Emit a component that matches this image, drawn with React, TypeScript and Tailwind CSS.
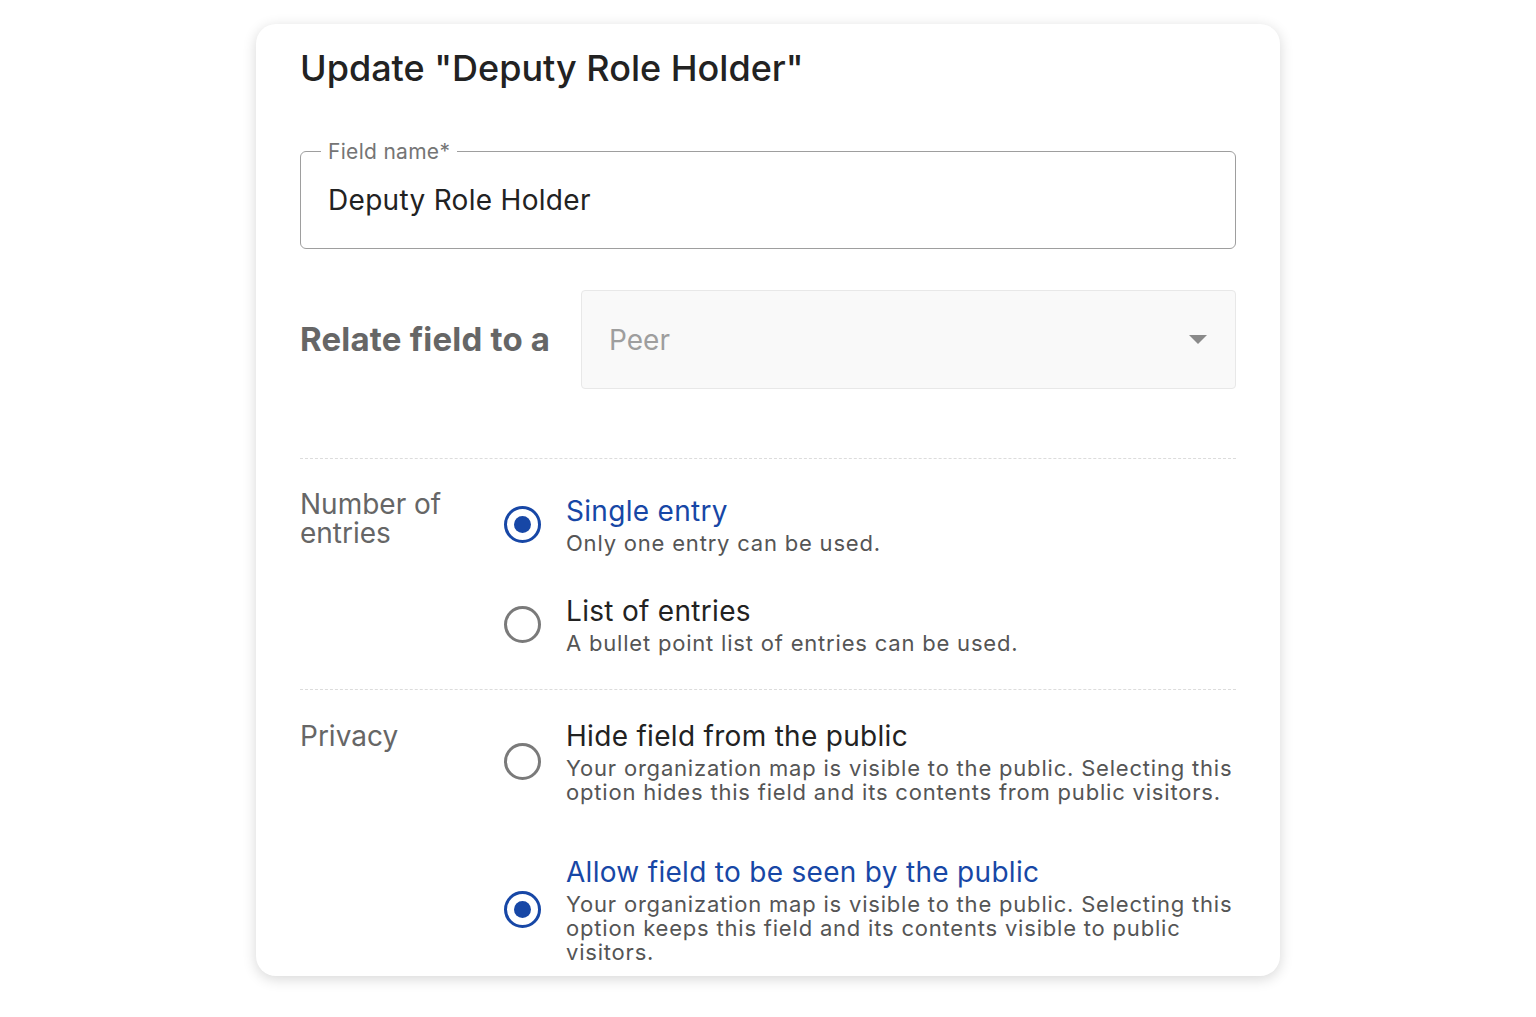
import React from "react"

type Option = {
  title: string
  description: string
  selected: boolean
}

const Radio = ({ selected }: { selected: boolean }): JSX.Element => {
  if (selected) {
    return (
      <div className="flex h-[37px] w-[37px] shrink-0 items-center justify-center rounded-full border-[3.5px] border-[#1747a6]">
        <div className="h-[17px] w-[17px] rounded-full bg-[#1747a6]" />
      </div>
    )
  }
  return <div className="h-[37px] w-[37px] shrink-0 rounded-full border-[3px] border-[#7a7a7a]" />
}

const RadioOption = ({ option, className }: { option: Option; className?: string }): JSX.Element => {
  return (
    <div className={`flex items-center ${className ?? ""}`}>
      <Radio selected={option.selected} />
      <div className="ml-[25px] flex-1">
        <div className={`text-[28px] leading-[34px] tracking-[0.3px] ${option.selected ? "text-[#1747a6]" : "text-[#222]"}`}>
          {option.title}
        </div>
        <div className="mt-[3px] text-[22px] leading-[24px] tracking-[0.8px] text-[#555]">
          {option.description}
        </div>
      </div>
    </div>
  )
}

const entryOptions: Option[] = [
  { title: "Single entry", description: "Only one entry can be used.", selected: true },
  { title: "List of entries", description: "A bullet point list of entries can be used.", selected: false },
]

const privacyOptions: Option[] = [
  {
    title: "Hide field from the public",
    description: "Your organization map is visible to the public. Selecting this option hides this field and its contents from public visitors.",
    selected: false,
  },
  {
    title: "Allow field to be seen by the public",
    description: "Your organization map is visible to the public. Selecting this option keeps this field and its contents visible to public visitors.",
    selected: true,
  },
]

const App = (): JSX.Element => {
  return (
    <div className="min-h-screen bg-white pt-[24px] font-['Inter','Noto_Sans',sans-serif]">
      <div className="mx-auto h-[952px] w-[1024px] overflow-hidden rounded-[20px] bg-white px-[44px] pt-[23px] shadow-[0_3px_14px_rgba(0,0,0,0.16)]">
        <h1 className="text-[36px] font-medium leading-[42px] text-[#222]">
          Update "Deputy Role Holder"
        </h1>

        <fieldset className="mt-[52px] h-[108px] rounded-[6px] border-[1.5px] border-[#9e9e9e] pl-[20px] pr-[27px]">
          <legend className="px-[7px] text-[21px] leading-[21px] tracking-[0.3px] text-[#757575]">Field name*</legend>
          <div className="ml-[7px] mt-[21px] text-[28px] leading-[34px] tracking-[0.3px] text-[#222]">Deputy Role Holder</div>
        </fieldset>

        <div className="mt-[41px] flex items-center">
          <div className="w-[281px] text-[33px] font-bold tracking-[0.2px] text-[#666]">
            Relate field to a
          </div>
          <div className="flex h-[99px] flex-1 items-center justify-between rounded-[4px] border border-[#e8e8e8] bg-[#f9f9f9] pl-[27px] pr-[28px]">
            <span className="text-[28px] text-[#9e9e9e]">Peer</span>
            <svg width="18" height="10" viewBox="0 0 18 10">
              <path d="M0 0h18L9 9z" fill="#8a8a8a" />
            </svg>
          </div>
        </div>

        <div className="mt-[69px] border-t-[1.5px] border-dashed border-[#dcdcdc] pb-[34px] pt-[35px]">
          <div className="flex">
            <div className="-mt-[4px] w-[204px] text-[28px] leading-[29px] text-[#666]">
              <div>Number of</div>
              <div>entries</div>
            </div>
            <div className="flex-1">
              <RadioOption option={entryOptions[0]} />
              <RadioOption option={entryOptions[1]} className="mt-[39px]" />
            </div>
          </div>
        </div>

        <div className="border-t-[1.5px] border-dashed border-[#dcdcdc] pt-[29px]">
          <div className="flex">
            <div className="mt-[3px] w-[204px] text-[28px] leading-[29px] text-[#666]">Privacy</div>
            <div className="flex-1">
              <RadioOption option={privacyOptions[0]} />
              <RadioOption option={privacyOptions[1]} className="mt-[51px]" />
            </div>
          </div>
        </div>
      </div>
    </div>
  )
}

export default App
